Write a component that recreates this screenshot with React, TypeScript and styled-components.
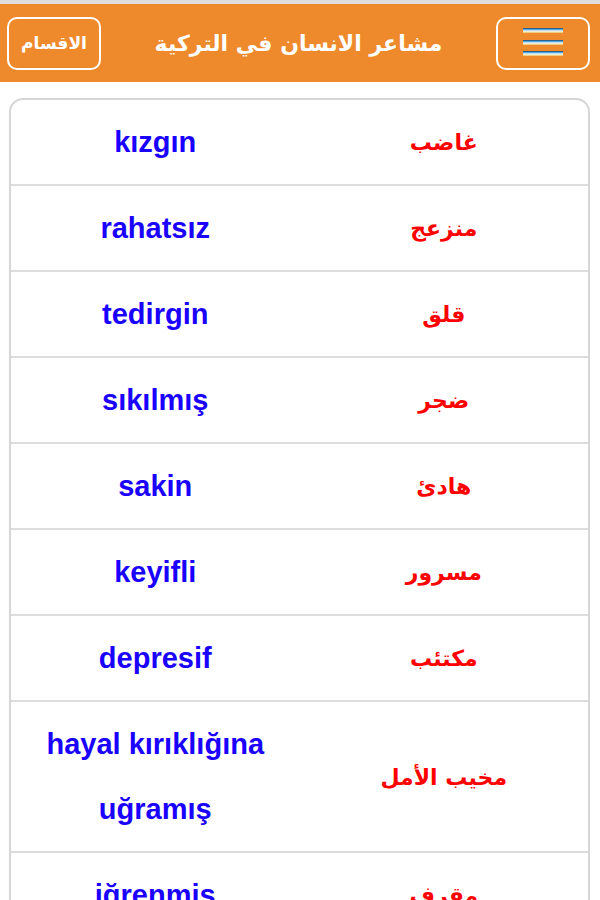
import styled, { createGlobalStyle } from "styled-components";

const GlobalStyle = createGlobalStyle`
  body {
    margin: 0;
    background: #fff;
    font-family: "Liberation Sans", Arial, sans-serif;
  }
`;

const words = [
  { tr: "kızgın", ar: "غاضب" },
  { tr: "rahatsız", ar: "منزعج" },
  { tr: "tedirgin", ar: "قلق" },
  { tr: "sıkılmış", ar: "ضجر" },
  { tr: "sakin", ar: "هادئ" },
  { tr: "keyifli", ar: "مسرور" },
  { tr: "depresif", ar: "مكتئب" },
  { tr: "hayal kırıklığına uğramış", ar: "مخيب الأمل" },
  { tr: "iğrenmiş", ar: "مقرف" },
  { tr: "korkmuş", ar: "خائف" },
];

const HamburgerIcon = () => (
  <svg width="42" height="30" viewBox="0 0 42 30">
    <defs>
      <linearGradient id="bar" x1="0" y1="0" x2="0" y2="1">
        <stop offset="0" stopColor="#1d3b5c" />
        <stop offset="0.3" stopColor="#4fa8e0" />
        <stop offset="0.6" stopColor="#f4fbff" />
        <stop offset="1" stopColor="#eebf55" />
      </linearGradient>
    </defs>
    <rect x="1" y="0" width="40" height="5" fill="url(#bar)" />
    <rect x="1" y="12" width="40" height="5" fill="url(#bar)" />
    <rect x="1" y="23" width="40" height="5" fill="url(#bar)" />
  </svg>
);

const App = () => {
  return (
    <>
      <GlobalStyle />
      <Header>
        <HeaderButton>الاقسام</HeaderButton>
        <Title>مشاعر الانسان في التركية</Title>
        <HeaderButton aria-label="menu">
          <HamburgerIcon />
        </HeaderButton>
      </Header>
      <Card>
        {words.map((w) => (
          <Row key={w.tr}>
            <Turkish>{w.tr}</Turkish>
            <Arabic>{w.ar}</Arabic>
          </Row>
        ))}
      </Card>
    </>
  );
};

const Header = styled.header`
  display: flex;
  align-items: center;
  justify-content: space-between;
  height: 78px;
  padding: 0 10px 0 7px;
  background: #ef8a2c;
  border-top: 4px solid #dedede;
`;

const HeaderButton = styled.button`
  display: flex;
  align-items: center;
  justify-content: center;
  width: 94px;
  height: 53px;
  padding: 0;
  background: transparent;
  border: 2px solid #fff;
  border-radius: 10px;
  color: #fff;
  font-family: "DejaVu Sans", sans-serif;
  font-size: 17px;
  font-weight: 700;
`;

const Title = styled.h1`
  margin: 0;
  color: #fff;
  font-family: "DejaVu Sans", sans-serif;
  font-size: 22px;
  font-weight: 700;
  direction: rtl;
`;

const Card = styled.div`
  margin: 16px 10px 0 9px;
  border: 2px solid #d6d6d6;
  border-radius: 14px;
  overflow: hidden;
`;

const Row = styled.div`
  display: grid;
  grid-template-columns: 1fr 1fr;
  align-items: center;
  padding: 10px 0 9px;
  border-bottom: 2px solid #dcdcdc;
`;

const Turkish = styled.div`
  padding: 0 20px;
  text-align: center;
  color: #1a00ff;
  font-family: "Liberation Sans", Arial, sans-serif;
  font-size: 29px;
  font-weight: 700;
  line-height: 65px;
`;

const Arabic = styled.div`
  text-align: center;
  color: #ff0000;
  font-family: "DejaVu Sans", sans-serif;
  font-size: 22px;
  font-weight: 700;
  direction: rtl;
`;

export default App;
